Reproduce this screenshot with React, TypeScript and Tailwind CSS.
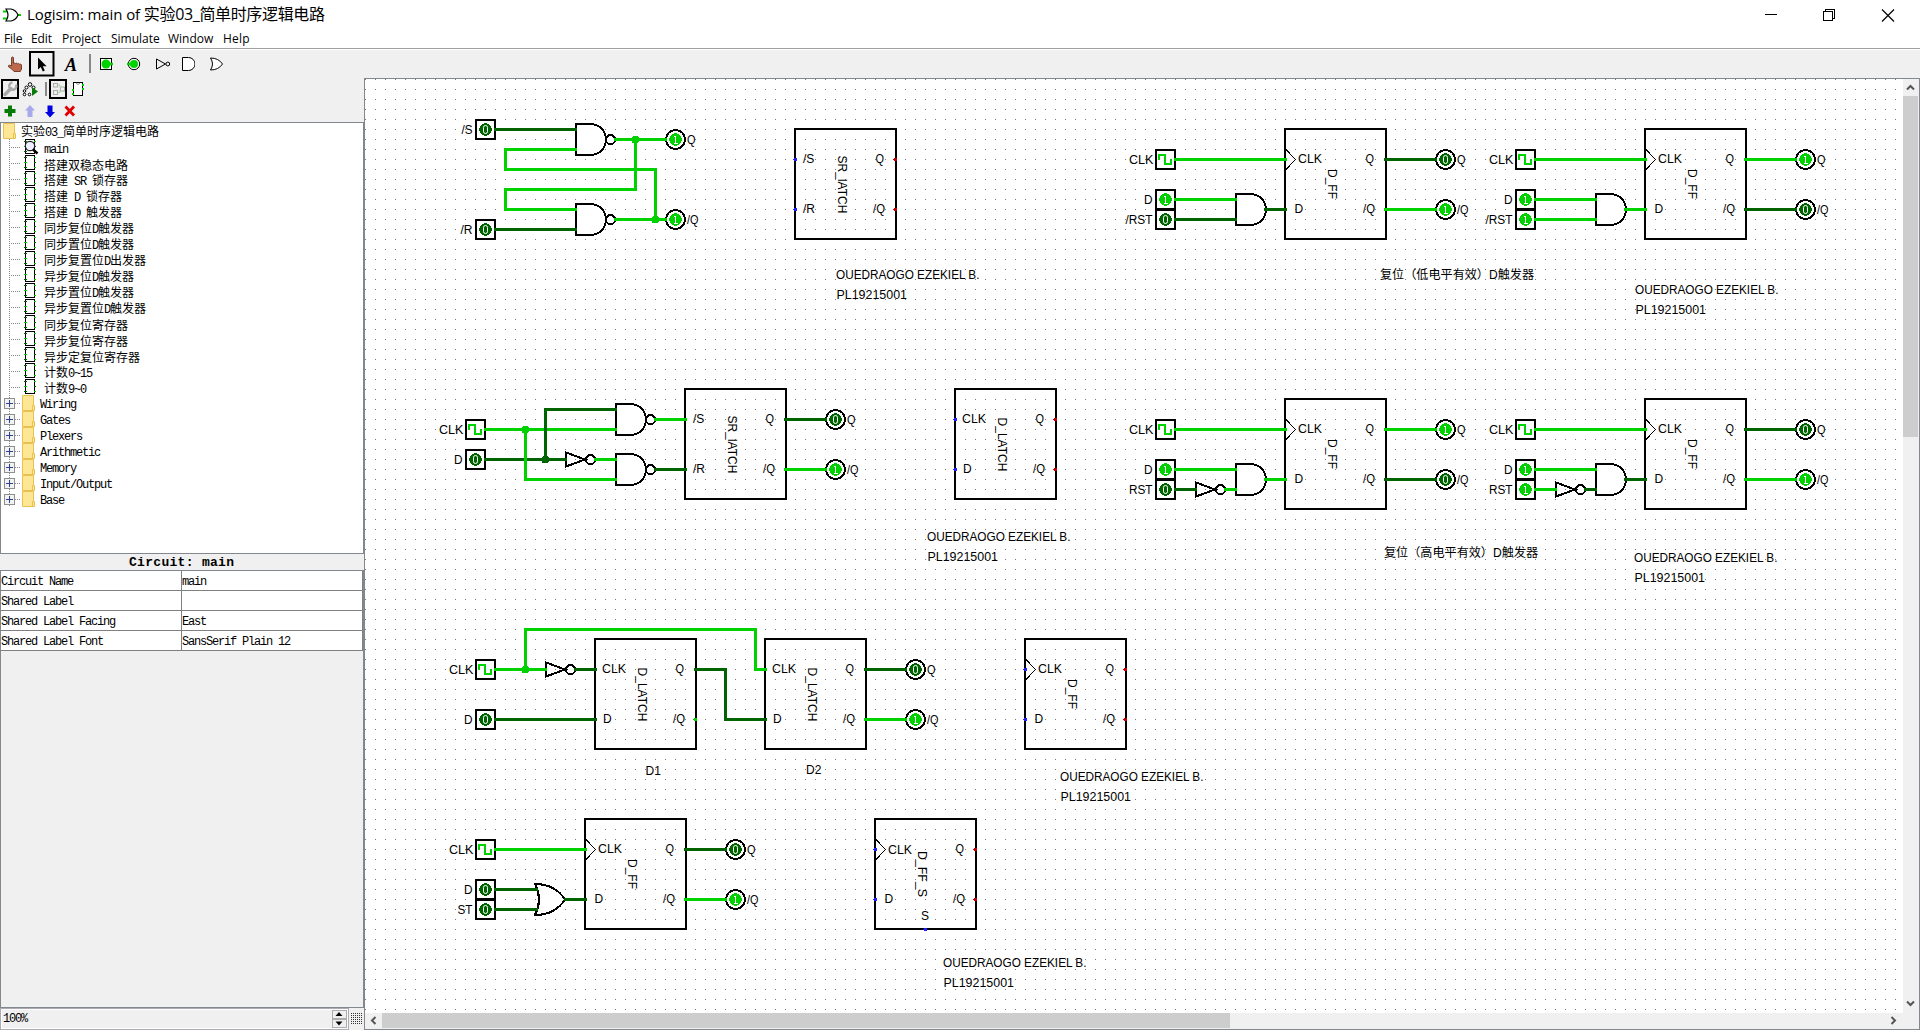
import React from "react";

type Pt = [number, number];
const ON = "#00d200";
const OFF = "#006400";
const level = (v: number) => (v ? ON : OFF);

/* ---------- Schematic primitives ---------- */

function Label({ x, y, children, w }: { x: number; y: number; children: string; w?: number }) {
  return (
    <text x={x} y={y} textLength={w} lengthAdjust="spacingAndGlyphs">
      {children}
    </text>
  );
}

function Wire({ pts, v }: { pts: Pt[]; v: number }) {
  return (
    <polyline
      points={pts.map(([x, y]) => `${x + 0.5},${y + 0.5}`).join(" ")}
      fill="none"
      stroke={level(v)}
      strokeWidth={3}
      strokeLinecap="square"
      strokeLinejoin="miter"
    />
  );
}

function Junction({ x, y, v }: { x: number; y: number; v: number }) {
  return <circle cx={x + 0.5} cy={y + 0.5} r={4} fill={level(v)} />;
}

function Digit({ x, y, v }: { x: number; y: number; v: number }) {
  return (
    <>
      <circle cx={x + 0.5} cy={y + 0.5} r={6.3} fill={level(v)} />
      {v ? (
        <path d={`M${x - 1} ${y - 2.5}h1.5v6M${x - 1.5} ${y + 4}h4`} fill="none" stroke="#fff" />
      ) : (
        <rect x={x - 1.5} y={y - 3.5} width={4} height={8} rx={2} fill="none" stroke="#fff" shapeRendering="auto" />
      )}
    </>
  );
}

function InPin({ x, y, v, label, lw }: { x: number; y: number; v: number; label: string; lw: number }) {
  return (
    <>
      <rect x={x - 9} y={y - 9} width={19} height={19} fill="#fff" stroke="#000" strokeWidth={2} />
      <Digit x={x} y={y} v={v} />
      <Label x={x - 12.5 - lw} y={y + 5} w={lw}>{label}</Label>
    </>
  );
}

function Clock({ x, y }: { x: number; y: number }) {
  return (
    <>
      <rect x={x - 9} y={y - 9} width={19} height={19} fill="#fff" stroke="#000" strokeWidth={2} />
      <path d={`M${x - 6} ${y + 1}v-5h6v9h6v-5`} fill="none" stroke={ON} strokeWidth={2} />
      <Label x={x - 36} y={y + 5} w={24.5}>CLK</Label>
    </>
  );
}

function OutPin({ x, y, v, label }: { x: number; y: number; v: number; label: string }) {
  return (
    <>
      <circle cx={x + 0.5} cy={y + 0.5} r={9.5} fill="#fff" stroke="#000" strokeWidth={2} />
      <Digit x={x} y={y} v={v} />
      <Label x={x + 12} y={y + 5} w={label === "Q" ? 8.5 : 11.5}>{label}</Label>
    </>
  );
}

function And({ x, y, nand }: { x: number; y: number; nand?: boolean }) {
  return (
    <g fill="none" stroke="#000" strokeWidth={2}>
      <path d={`M${x + 15.5} ${y - 15}H${x + 1}V${y + 16}H${x + 15.5}A15.5 15.5 0 0 0 ${x + 15.5} ${y - 15}Z`} fill="#fff" />
      {nand && <circle cx={x + 35.5} cy={y + 0.5} r={4.5} />}
    </g>
  );
}

function Or({ x, y }: { x: number; y: number }) {
  return (
    <path
      d={`M${x} ${y - 15}Q${x + 20} ${y - 15} ${x + 30} ${y + 0.5}Q${x + 20} ${y + 16} ${x} ${y + 16}Q${x + 8} ${y + 0.5} ${x} ${y - 15}Z`}
      fill="#fff"
      stroke="#000"
      strokeWidth={2}
    />
  );
}

function Not({ x, y }: { x: number; y: number }) {
  return (
    <g fill="none" stroke="#000" strokeWidth={2}>
      <path d={`M${x + 1} ${y - 6.5}V${y + 7.5}L${x + 20} ${y + 0.5}Z`} />
      <circle cx={x + 25.5} cy={y + 0.5} r={4.5} />
    </g>
  );
}

type ChipProps = {
  x: number;
  y: number;
  name: string;
  nameAt: [number, number, number];
  a: string;
  b: string;
  clocked?: boolean;
  idle?: boolean;
  clkDy?: number;
};

function Chip({ x, y, name, nameAt, a, b, clocked, idle, clkDy = 34 }: ChipProps) {
  const [nx, ny, nw] = nameAt;
  return (
    <>
      <rect x={x} y={y} width={101} height={110} fill="none" stroke="#000" strokeWidth={2} />
      {clocked && <path d={`M${x + 1} ${y + 20.5}L${x + 10.5} ${y + 30.5}L${x + 1} ${y + 40.5}`} fill="none" stroke="#000" />}
      <Label x={x + (clocked ? 13 : a === "CLK" ? 7 : 8)} y={y + clkDy} w={a === "CLK" ? 24 : undefined}>{a}</Label>
      <Label x={x + (clocked ? 9.5 : 8)} y={y + 84}>{b}</Label>
      <Label x={x + 80.5} y={y + 34} w={8.5}>Q</Label>
      <Label x={x + 78} y={y + 84} w={12}>/Q</Label>
      <text transform={`translate(${x + nx} ${y + ny}) rotate(90)`} textLength={nw} lengthAdjust="spacingAndGlyphs">
        {name}
      </text>
      {idle &&
        [30, 80].map((dy) => (
          <React.Fragment key={dy}>
            <circle cx={x + 0.5} cy={y + dy + 0.5} r={2} fill="#2020ff" />
            <circle cx={x + 100.5} cy={y + dy + 0.5} r={2} fill="#c00000" />
          </React.Fragment>
        ))}
    </>
  );
}

function Author({ x, y }: { x: number; y: number }) {
  return (
    <>
      <Label x={x} y={y} w={143.5}>OUEDRAOGO EZEKIEL B.</Label>
      <Label x={x + 0.5} y={y + 20} w={70.5}>PL19215001</Label>
    </>
  );
}

/* Flip-flop with a reset network; (x, y) is the top left corner of the chip. */
function ResetFF({ x, y, d, r, q, inverted }: { x: number; y: number; d: number; r: number; q: number; inverted?: boolean }) {
  const g = inverted ? 1 - r : r;
  const px = x - 120;
  return (
    <>
      <Clock x={px} y={y + 30} />
      <InPin x={px} y={y + 70} v={d} label="D" lw={8.5} />
      <InPin x={px} y={y + 90} v={r} label={inverted ? "RST" : "/RST"} lw={inverted ? 23.5 : 27} />
      <And x={x - 50} y={y + 80} />
      {inverted && <Not x={x - 90} y={y + 90} />}
      <Chip x={x} y={y} name="D_FF" nameAt={[42.5, 40, 30]} a="CLK" b="D" clocked />
      <OutPin x={x + 160} y={y + 30} v={q} label="Q" />
      <OutPin x={x + 160} y={y + 80} v={1 - q} label="/Q" />
      <Wire v={1} pts={[[x - 110, y + 30], [x, y + 30]]} />
      <Wire v={d} pts={[[x - 110, y + 70], [x - 50, y + 70]]} />
      {inverted ? (
        <>
          <Wire v={r} pts={[[x - 110, y + 90], [x - 90, y + 90]]} />
          <Wire v={g} pts={[[x - 60, y + 90], [x - 50, y + 90]]} />
        </>
      ) : (
        <Wire v={r} pts={[[x - 110, y + 90], [x - 50, y + 90]]} />
      )}
      <Wire v={d & g} pts={[[x - 20, y + 80], [x, y + 80]]} />
      <Wire v={q} pts={[[x + 100, y + 30], [x + 150, y + 30]]} />
      <Wire v={1 - q} pts={[[x + 100, y + 80], [x + 150, y + 80]]} />
    </>
  );
}

function Schematic() {
  return (
    <svg
      width={1538}
      height={934}
      viewBox="365 79 1538 934"
      shapeRendering="crispEdges"
      className="block bg-white font-['Liberation_Sans','Noto_Sans_CJK_SC',sans-serif] text-[12px]"
    >
      <defs>
        <pattern id="grid" x={365} y={79} width={10} height={10} patternUnits="userSpaceOnUse">
          <rect width={1} height={1} fill="#777" />
        </pattern>
      </defs>
      <rect x={365} y={79} width={1538} height={934} fill="url(#grid)" />

      {/* SR latch from two NAND gates */}
      <InPin x={485} y={129} v={0} label="/S" lw={11} />
      <InPin x={485} y={229} v={0} label="/R" lw={12} />
      <And x={575} y={139} nand />
      <And x={575} y={219} nand />
      <OutPin x={675} y={139} v={1} label="Q" />
      <OutPin x={675} y={219} v={1} label="/Q" />
      <Wire v={0} pts={[[495, 129], [575, 129]]} />
      <Wire v={0} pts={[[495, 229], [575, 229]]} />
      <Wire v={1} pts={[[615, 139], [665, 139]]} />
      <Wire v={1} pts={[[615, 219], [665, 219]]} />
      <Wire v={1} pts={[[575, 149], [505, 149], [505, 169], [655, 169], [655, 219]]} />
      <Wire v={1} pts={[[575, 209], [505, 209], [505, 189], [635, 189], [635, 139]]} />
      <Junction x={635} y={139} v={1} />
      <Junction x={655} y={219} v={1} />
      <Chip x={795} y={129} name="SR_lATCH" nameAt={[43, 26.5, 58]} a="/S" b="/R" idle />
      <Author x={836} y={279} />

      {/* Gated D latch */}
      <Clock x={475} y={429} />
      <InPin x={475} y={459} v={0} label="D" lw={8.5} />
      <Not x={565} y={459} />
      <And x={615} y={419} nand />
      <And x={615} y={469} nand />
      <Chip x={685} y={389} name="SR_lATCH" nameAt={[43, 26.5, 58]} a="/S" b="/R" />
      <OutPin x={835} y={419} v={0} label="Q" />
      <OutPin x={835} y={469} v={1} label="/Q" />
      <Wire v={1} pts={[[485, 429], [615, 429]]} />
      <Wire v={0} pts={[[485, 459], [565, 459]]} />
      <Wire v={0} pts={[[545, 459], [545, 409], [615, 409]]} />
      <Wire v={1} pts={[[525, 429], [525, 479], [615, 479]]} />
      <Wire v={1} pts={[[595, 459], [615, 459]]} />
      <Wire v={1} pts={[[655, 419], [685, 419]]} />
      <Wire v={0} pts={[[655, 469], [685, 469]]} />
      <Wire v={0} pts={[[785, 419], [825, 419]]} />
      <Wire v={1} pts={[[785, 469], [825, 469]]} />
      <Junction x={525} y={429} v={1} />
      <Junction x={545} y={459} v={0} />
      <Chip x={955} y={389} name="D_LATCH" nameAt={[43, 28.5, 54]} a="CLK" b="D" idle />
      <Author x={927} y={541} />

      {/* Master-slave flip-flop */}
      <Clock x={485} y={669} />
      <InPin x={485} y={719} v={0} label="D" lw={8.5} />
      <Not x={545} y={669} />
      <Chip x={595} y={639} name="D_LATCH" nameAt={[43, 28.5, 54]} a="CLK" b="D" />
      <Chip x={765} y={639} name="D_LATCH" nameAt={[43, 28.5, 54]} a="CLK" b="D" />
      <OutPin x={915} y={669} v={0} label="Q" />
      <OutPin x={915} y={719} v={1} label="/Q" />
      <Wire v={1} pts={[[495, 669], [545, 669]]} />
      <Wire v={1} pts={[[525, 669], [525, 629], [755, 629], [755, 669], [765, 669]]} />
      <Wire v={0} pts={[[575, 669], [595, 669]]} />
      <Wire v={0} pts={[[495, 719], [595, 719]]} />
      <Wire v={0} pts={[[695, 669], [725, 669], [725, 719], [765, 719]]} />
      <Wire v={0} pts={[[865, 669], [905, 669]]} />
      <Wire v={1} pts={[[865, 719], [905, 719]]} />
      <Junction x={525} y={669} v={1} />
      <circle cx={695.5} cy={719.5} r={2} fill={ON} />
      <Label x={645.5} y={775}>D1</Label>
      <Label x={806} y={774}>D2</Label>
      <Chip x={1025} y={639} name="D_FF" nameAt={[42.5, 40, 30]} a="CLK" b="D" clocked idle />
      <Author x={1060} y={781} />

      {/* Flip-flop with set input */}
      <Clock x={485} y={849} />
      <InPin x={485} y={889} v={0} label="D" lw={8.5} />
      <InPin x={485} y={909} v={0} label="ST" lw={15} />
      <Chip x={585} y={819} name="D_FF" nameAt={[42.5, 40, 30]} a="CLK" b="D" clocked />
      <OutPin x={735} y={849} v={0} label="Q" />
      <OutPin x={735} y={899} v={1} label="/Q" />
      <Or x={535} y={899} />
      <Wire v={1} pts={[[495, 849], [585, 849]]} />
      <Wire v={0} pts={[[495, 889], [536, 889]]} />
      <Wire v={0} pts={[[495, 909], [536, 909]]} />
      <Wire v={0} pts={[[565, 899], [585, 899]]} />
      <Wire v={0} pts={[[685, 849], [725, 849]]} />
      <Wire v={1} pts={[[685, 899], [725, 899]]} />
      <Chip x={875} y={819} name="D_FF_S" nameAt={[42.5, 32, 46]} a="CLK" b="D" clocked idle clkDy={35} />
      <Label x={921} y={920}>S</Label>
      <circle cx={925.5} cy={929.5} r={2} fill="#2020ff" />
      <Author x={943} y={967} />

      {/* Active-low reset */}
      <ResetFF x={1285} y={129} d={1} r={0} q={0} />
      <ResetFF x={1645} y={129} d={1} r={1} q={1} />
      <Label x={1380} y={279} w={154}>复位（低电平有效）D触发器</Label>
      <Author x={1635} y={294} />

      {/* Active-high reset */}
      <ResetFF x={1285} y={399} d={1} r={0} q={1} inverted />
      <ResetFF x={1645} y={399} d={1} r={1} q={0} inverted />
      <Label x={1384} y={557} w={154}>复位（高电平有效）D触发器</Label>
      <Author x={1634} y={562} />
    </svg>
  );
}

/* ---------- Window chrome ---------- */

function TitleBar() {
  return (
    <header className="flex h-[29px] shrink-0 items-center bg-white pl-[3px]">
      <svg width="18" height="14" viewBox="0 0 18 14" className="mr-[6px]">
        <path d="M0 3.5h4M0 10.5h4M14 7h4" stroke={ON} strokeWidth="2" />
        <path d="M3 1H8Q13 2 15 7Q13 12 8 13H3Q7 7 3 1Z" fill="#fff" stroke="#000" strokeWidth="1.2" />
      </svg>
      <h1 className="flex-1 whitespace-pre pb-[2px] font-['Open_Sans','Noto_Sans_CJK_SC',sans-serif] text-[15px] leading-[26px] tracking-[-0.1px] text-black">
        Logisim: main of <span className="text-[16px] tracking-[-0.35px]">实验03_简单时序逻辑电路</span>
      </h1>
      <svg width="155" height="14" viewBox="0 0 155 14" className="mr-[20px]" fill="none" stroke="#000" shapeRendering="crispEdges">
        <path d="M20 6.5H32" />
        <path d="M78.500 3.500h9v9h-9zM80.500 3.500v-2h9v9h-2" />
        <path d="M137 1.500l12 12M149 1.500l-12 12" shapeRendering="auto" strokeWidth="1.2" />
      </svg>
    </header>
  );
}

function MenuBar() {
  return (
    <nav className="flex h-5 shrink-0 border-b border-[#a0a0a0] bg-white pl-1 pt-px font-['Open_Sans',sans-serif] text-[12px] leading-[18px] text-black">
      <span className="w-[27px] tracking-[-0.2px]">File</span>
      <span className="w-[31px] tracking-[-0.1px]">Edit</span>
      <span className="w-[49px] tracking-[0px]">Project</span>
      <span className="w-[57px] tracking-[0px]">Simulate</span>
      <span className="w-[55px]">Window</span>
      <span className="tracking-[0.2px]">Help</span>
    </nav>
  );
}

function MainToolbar() {
  return (
    <div className="flex h-7 shrink-0 items-center border-t border-white">
      <svg width="190" height="26" viewBox="0 0 190 26" className="ml-[5px] mt-[1px]" fill="none" stroke="#000">
        <path
          d="M6.500 6.500q1 -1.200 2 0v6q1 -1.200 2 0q1.200 -1 2 .3q1.200 -.8 2 .4q1.500 -.6 2 .8v4l-1.200 2.500h-6.300q-1.500 -2.500 -5.300 -4.500q-1 -2 1 -1.800l1.800 .8z"
          fill="#bd6a4c"
          stroke="#6b3322"
          strokeWidth="0.9"
        />
        <rect x="25" y="1" width="23.500" height="23.500" strokeWidth="2" />
        <path d="M33 6.500v12l2.800 -2.600l2 4.500l2 -.9l-2 -4.300h3.800z" fill="#000" stroke="none" />
        <text x="60" y="19.500" fill="#000" stroke="none" className="font-['Liberation_Serif',serif] text-[18px] font-bold italic">A</text>
        <path d="M85 3v19" stroke="#888" strokeWidth="2" />
        <rect x="95.500" y="7.500" width="11" height="11" fill="#fff" />
        <circle cx="101" cy="13" r="4.500" fill={ON} stroke="none" />
        <path d="M104 13h4" stroke={ON} strokeWidth="2.500" />
        <circle cx="129" cy="13" r="5.700" fill="#fff" />
        <circle cx="129" cy="13" r="4" fill={ON} stroke="none" />
        <path d="M122 13h4" stroke={ON} strokeWidth="2.500" />
        <path d="M151.500 8v10l9 -5z" />
        <circle cx="162.800" cy="13" r="1.900" />
        <path d="M177.500 6.500h6a6.500 6.500 0 0 1 0 13h-6z" fill="#fff" />
      </svg>
      <svg width="28" height="26" viewBox="0 0 28 26" className="mt-[1px]" fill="none" stroke="#000">
        <path d="M15.500 7q8 0 12 6q-4 6 -12 6q4 -6 0 -12z" fill="#fff" />
      </svg>
    </div>
  );
}

function ExplorerToolbar() {
  return (
    <svg width="363" height="43" viewBox="0 0 363 43" className="block shrink-0" fill="none" stroke="#000">
      <rect x="2" y="1" width="16" height="18" strokeWidth="2" />
      <path d="M5 15.500L11 9.500" stroke="#aaa" strokeWidth="3.500" strokeLinecap="round" />
      <path d="M16 5.500a3.600 3.600 0 1 1 -3.500 -2" stroke="#aaa" strokeWidth="2.400" />
      <g strokeWidth="1" fill="#fff">
        <circle cx="30" cy="5.500" r="1.800" />
        <circle cx="26.500" cy="8.500" r="1.500" />
        <circle cx="33.500" cy="8.500" r="1.500" />
        <circle cx="24.500" cy="12" r="1.300" />
        <circle cx="24.500" cy="15.500" r="1.300" />
        <circle cx="29.500" cy="15.500" r="1.300" />
      </g>
      <path d="M32 8v9l6 -4.500z" fill="#087a08" stroke="none" />
      <path d="M46 3v14" stroke="#888" strokeWidth="2" />
      <rect x="50" y="1" width="16" height="18" strokeWidth="2" />
      <g stroke="#aaa">
        <rect x="53.500" y="4.500" width="4" height="3.500" />
        <rect x="53.500" y="11.500" width="4" height="4" />
        <rect x="60.500" y="8" width="4" height="4" />
      </g>
      <path d="M58 6h2v3M58 13.500h2v-3" stroke="#9fdc9f" />
      <rect x="73.500" y="3.500" width="9" height="13" fill="#fff" />
      <path d="M76 4q2 3 4 0" stroke="#888" />
      <path d="M72 11h2M72 15h2M82 6h2M82 10h2" stroke={ON} strokeWidth="2" />
      <path d="M10 26.500v11M4.500 32h11" stroke="#087a08" strokeWidth="4" />
      <path d="M30 26l5 5.500h-2.500v6.500h-5v-6.500h-2.500z" fill="#a8a8ec" stroke="none" />
      <path d="M50 38.500l5 -5.500h-2.500v-6.500h-5v6.500h-2.500z" fill="#0000e0" stroke="none" />
      <path d="M65.500 27.500l8.500 9M74 27.500l-8.500 9" stroke="#e00000" strokeWidth="2.800" />
    </svg>
  );
}

/* Latin characters take half the width of a CJK character. */
function HalfWidth({ text }: { text: string }) {
  return (
    <span className="whitespace-pre">
      {text.split(/([\x20-\x7e]+)/).map((part, i) =>
        /^[\x20-\x7e]+$/.test(part) ? (
          <span key={i} className="font-['Liberation_Mono',monospace] text-[12px] tracking-[-1.2px]">{part}</span>
        ) : (
          <span key={i} className="font-['Noto_Sans_CJK_SC',sans-serif] text-[12px]">{part}</span>
        )
      )}
    </span>
  );
}

function Folder() {
  return (
    <svg width="13" height="16" viewBox="0 0 13 16" className="shrink-0">
      <path d="M.5 .5h11v10h1v5h-12z" fill="#ffe694" stroke="#e8c250" />
      <path d="M10.500 15v-4.500h1.500" fill="none" stroke="#e8c250" />
    </svg>
  );
}

function CircuitIcon({ current }: { current?: boolean }) {
  return (
    <svg width="15" height="16" viewBox="0 0 15 16" className="shrink-0" shapeRendering="crispEdges">
      <rect x="1.500" y="0.500" width="9" height="14" fill="#fff" stroke="#000" />
      <path d="M0 2.500h3M0 12.500h3M10 7.500h2" stroke={OFF} />
      <path d="M0 7.500h3M10 2.500h2M10 12.500h2" stroke={ON} />
      {current && (
        <g shapeRendering="auto">
          <circle cx="6" cy="7" r="4.700" fill="#eef" stroke="#222" strokeWidth="1.200" />
          <path d="M9 10.500l4.500 4" stroke="#000" strokeWidth="2.500" />
        </g>
      )}
    </svg>
  );
}

const circuits = [
  "main", "搭建双稳态电路", "搭建 SR 锁存器", "搭建 D 锁存器", "搭建 D 触发器",
  "同步复位D触发器", "同步置位D触发器", "同步复置位D出发器", "异步复位D触发器",
  "异步置位D触发器", "异步复置位D触发器", "同步复位寄存器", "异步复位寄存器",
  "异步定复位寄存器", "计数0~15", "计数9~0",
];
const libraries = ["Wiring", "Gates", "Plexers", "Arithmetic", "Memory", "Input/Output", "Base"];

function Tree() {
  return (
    <div className="h-[432px] w-[364px] shrink-0 overflow-hidden border border-[#828790] bg-white leading-[16px] text-black">
      <div className="flex h-4 items-center pl-[2px]">
        <Folder />
        <span className="pl-[5px] pt-px"><HalfWidth text="实验03_简单时序逻辑电路" /></span>
      </div>
      {circuits.map((name, i) => (
        <div key={name} className="flex h-4 items-center pl-2">
          <svg width="12" height="16" className="shrink-0">
            <path d="M.5 0V16M0 8.500H12" stroke="#888" strokeDasharray="1 1" shapeRendering="crispEdges" />
          </svg>
          <span className="w-[3px]" />
          <CircuitIcon current={i === 0} />
          <span className="pl-[5px] pt-[2px]"><HalfWidth text={name} /></span>
        </div>
      ))}
      {libraries.map((name) => (
        <div key={name} className="flex h-4 items-center pl-[3px]">
          <svg width="18" height="16" viewBox="0 0 18 16" className="shrink-0" shapeRendering="crispEdges">
            <path d="M5.500 0V16M11 8.500H17" stroke="#888" strokeDasharray="1 1" />
            <rect x="0.500" y="3.500" width="10" height="10" fill="#f2f2f2" stroke="#8e8f8f" />
            <path d="M2 8.500h7M5.500 5v7" stroke="#2b4294" />
          </svg>
          <Folder />
          <span className="pl-[5px]"><HalfWidth text={name} /></span>
        </div>
      ))}
    </div>
  );
}

const attributes = [
  ["Circuit Name", "main"],
  ["Shared Label", ""],
  ["Shared Label Facing", "East"],
  ["Shared Label Font", "SansSerif Plain 12"],
];

function Attributes() {
  return (
    <>
      <div className="h-4 shrink-0 pl-[129px] font-['Liberation_Mono',monospace] text-[13px] font-bold leading-[18px] tracking-[0.3px] text-black">
        Circuit: main
      </div>
      <div className="w-[364px] flex-1 border border-[#828790]">
        {attributes.map(([k, v]) => (
          <div key={k} className="flex h-5 w-[362px] border-b border-r border-[#808080] bg-white leading-[17px] text-black">
            <div className="w-[181px] border-r border-[#808080]"><HalfWidth text={k} /></div>
            <div><HalfWidth text={v} /></div>
          </div>
        ))}
      </div>
    </>
  );
}

function ZoomBar() {
  return (
    <div className="flex h-[22px] shrink-0 items-center">
      <div className="flex h-[22px] w-[349px] items-center justify-between border border-[#acacb4] bg-[#f0f0f0] pl-[2px] pr-px ring-1 ring-inset ring-white">
        <span className="pb-[3px] leading-[16px] text-black"><HalfWidth text="100%" /></span>
        <div className="flex w-[15px] flex-col">
          {["M3.500 6h7l-3.500 -4z", "M3.500 2.500h7l-3.500 4z"].map((d) => (
            <svg key={d} width="15" height="9" viewBox="0 0 15 9">
              <rect x="0.500" y="0.500" width="14" height="8" fill="#f0f0f0" stroke="#acacac" />
              <path d={d} fill="#000" />
            </svg>
          ))}
        </div>
      </div>
      <svg width="12" height="12" viewBox="0 0 12 12" className="ml-[2px]" shapeRendering="crispEdges">
        {[0, 2, 4, 6, 8, 10].map((r) => (
          <path key={r} d={`M0 ${r + 0.5}H11`} stroke="#333" strokeDasharray="1 1" />
        ))}
      </svg>
    </div>
  );
}

function Chevron({ d }: { d: string }) {
  return (
    <svg width="9" height="9" viewBox="0 0 9 9" fill="none" stroke="#555" strokeWidth="2">
      <path d={d} />
    </svg>
  );
}

export default function App() {
  return (
    <div className="flex h-[1030px] w-[1920px] flex-col overflow-hidden bg-[#f0f0f0]">
      <TitleBar />
      <MenuBar />
      <div className="flex min-h-0 flex-1">
        <aside className="flex w-[364px] shrink-0 flex-col">
          <MainToolbar />
          <div className="h-[2px] shrink-0" />
          <ExplorerToolbar />
          <Tree />
          <Attributes />
          <ZoomBar />
        </aside>
        <div className="flex min-w-0 flex-1 flex-col">
          <div className="h-[29px] shrink-0 border-t border-white" />
          <main className="flex flex-1 flex-col border border-[#828790]">
            <div className="flex h-[934px]">
              <Schematic />
              <div className="flex w-[15px] flex-col items-center">
                <div className="flex h-[17px] items-center"><Chevron d="M1 6.500L4.500 3L8 6.500" /></div>
                <div className="h-[341px] w-[15px] bg-[#cdcdcd]" />
                <div className="flex flex-1 items-end pb-[5px]"><Chevron d="M1 2.500L4.500 6L8 2.500" /></div>
              </div>
            </div>
            <div className="flex h-[15px] items-center">
              <div className="flex w-[17px] justify-center"><Chevron d="M6.500 1L3 4.500L6.500 8" /></div>
              <div className="h-[15px] w-[848px] bg-[#cdcdcd]" />
              <div className="flex flex-1 justify-end pr-[21px]"><Chevron d="M2.500 1L6 4.500L2.500 8" /></div>
            </div>
          </main>
        </div>
      </div>
    </div>
  );
}
